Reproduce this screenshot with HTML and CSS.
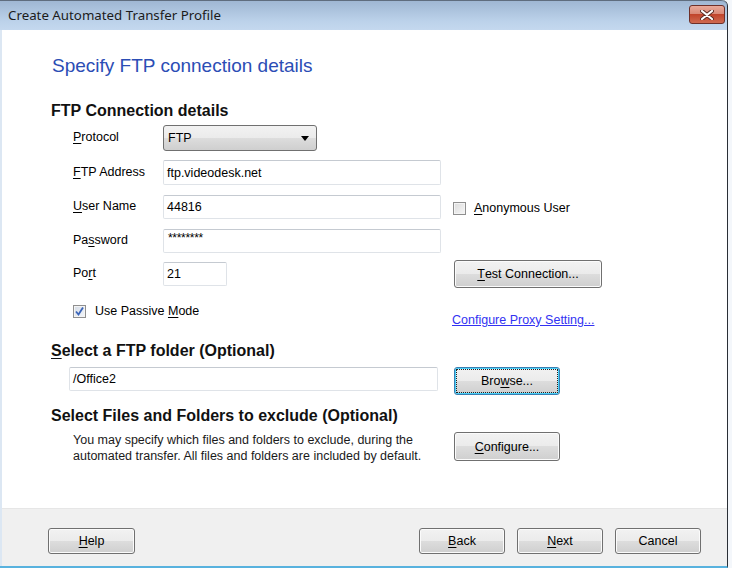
FILE: index.html
```html
<!DOCTYPE html>
<html>
<head>
<meta charset="utf-8">
<link rel="stylesheet" href="styles.css">
</head>
<body>
<div class="window">
  <div class="titlebar">
    <span class="title">Create Automated Transfer Profile</span>
    <button class="close" aria-label="Close">
      <svg width="14" height="10" viewBox="0 0 14 10"><path d="M2 1 L12 9 M12 1 L2 9" stroke="#5a2a22" stroke-width="4" stroke-linecap="round"/><path d="M2 1 L12 9 M12 1 L2 9" stroke="#ffffff" stroke-width="2.2" stroke-linecap="round"/></svg>
    </button>
  </div>
  <div class="client">
    <div class="content">
      <h1 class="main-heading">Specify FTP connection details</h1>
      <h2 class="section-heading first">FTP Connection details</h2>
      <div class="form">
        <div class="row r-protocol">
          <span class="label"><u>P</u>rotocol</span>
          <div class="field"><div class="combo"><span>FTP</span><svg width="8" height="5" viewBox="0 0 8 5"><path d="M0 0 H8 L4 5 Z" fill="#000"/></svg></div></div>
        </div>
        <div class="row r-address">
          <span class="label"><u>F</u>TP Address</span>
          <div class="field"><div class="input wide">ftp.videodesk.net</div></div>
        </div>
        <div class="row r-user">
          <span class="label"><u>U</u>ser Name</span>
          <div class="field"><div class="input wide">44816</div></div>
          <label class="check anon"><span class="box"></span><span><u>A</u>nonymous User</span></label>
        </div>
        <div class="row r-pass">
          <span class="label">Pa<u>s</u>sword</span>
          <div class="field"><div class="input wide pw">********</div></div>
        </div>
        <div class="row r-port">
          <span class="label">Po<u>r</u>t</span>
          <div class="field"><div class="input port">21</div></div>
          <button class="btn test"><u>T</u>est Connection...</button>
        </div>
        <div class="row r-passive">
          <label class="check passive"><span class="box checked"><svg width="11" height="11" viewBox="0 0 11 11"><path d="M2 5.5 L4.5 8.5 L9 1.5" stroke="#3a64b8" stroke-width="1.8" fill="none"/></svg></span><span>Use Passive <u>M</u>ode</span></label>
          <a class="link" href="#">Configure Proxy Setting...</a>
        </div>
      </div>
      <h2 class="section-heading second"><u>S</u>elect a FTP folder (Optional)</h2>
      <div class="row r-folder">
        <div class="input folder">/Office2</div>
        <button class="btn focus"><span class="dots">Bro<u>w</u>se...</span></button>
      </div>
      <h2 class="section-heading third">Select Files and Folders to exclude (Optional)</h2>
      <div class="row r-exclude">
        <p class="desc">You may specify which files and folders to exclude, during the automated transfer. All files and folders are included by default.</p>
        <button class="btn configure"><u>C</u>onfigure...</button>
      </div>
    </div>
    <div class="footer">
      <button class="btn fbtn help"><u>H</u>elp</button>
      <div class="spacer"></div>
      <button class="btn fbtn"><u>B</u>ack</button>
      <button class="btn fbtn"><u>N</u>ext</button>
      <button class="btn fbtn">Cancel</button>
    </div>
  </div>
</div>
</body>
</html>
```

FILE: styles.css
```css
html, body {
  margin: 0;
  padding: 0;
}
body {
  width: 732px;
  height: 568px;
  overflow: hidden;
  background: #f4f7fb;
  font-family: "Liberation Sans", Arial, sans-serif;
  font-size: 12.5px;
  color: #000;
}
.window {
  width: 727px;
  height: 566px;
  display: flex;
  flex-direction: column;
  border-right: 1px solid #2a2f36;
  border-bottom: 2px solid #58b2de;
  border-top-right-radius: 6px;
  background: #c9dbef;
}
.titlebar {
  height: 30px;
  flex: none;
  display: flex;
  align-items: center;
  justify-content: space-between;
  background: linear-gradient(#9fb7d3, #bcd2ea 70%, #c4d8ee);
  border-top: 1px solid #5f6d7e;
  border-top-right-radius: 6px;
  box-sizing: border-box;
  padding: 0 2px 2px 8px;
}
.title {
  font-family: "Noto Sans", "Open Sans", sans-serif;
  font-size: 13.3px;
  color: #1b1b1b;
  margin-top: 1px;
}
.close {
  width: 36px;
  height: 19px;
  padding: 0;
  border: 1px solid #6e3029;
  border-radius: 3px;
  background: linear-gradient(#e9a99a, #d98a78 45%, #c1452c 50%, #cf6a50);
  display: flex;
  align-items: center;
  justify-content: center;
}
.client {
  flex: 1;
  display: flex;
  flex-direction: column;
  border-left: 2px solid #dce7f3;
  background: #fff;
}
.content {
  flex: 1;
  padding: 24px 0 0 49px;
}
.main-heading {
  margin: 0 0 0 1px;
  font-size: 19px;
  line-height: 23px;
  font-weight: normal;
  color: #2b4db5;
}
.section-heading {
  margin: 0;
  font-size: 16px;
  line-height: 18px;
  font-weight: bold;
  color: #111;
}
.section-heading.first { margin-top: 25px; }
.section-heading.second { margin-top: 12px; }
.section-heading.third { margin-top: 12px; }
.form {
  margin-top: 5px;
  padding-left: 22px;
}
.row {
  display: flex;
  align-items: center;
}
.label {
  width: 90px;
  flex: none;
  margin-top: -2px;
}
.field {
  width: 290px;
  flex: none;
  height: 100%;
  display: flex;
  align-items: center;
}
u { text-decoration: underline; text-underline-offset: 2px; }
.r-protocol { height: 26px; }
.r-address { height: 25px; margin-top: 9px; }
.r-user { height: 24px; margin-top: 10px; }
.r-pass { height: 24px; margin-top: 10px; }
.r-port { height: 28px; margin-top: 7px; }
.r-passive { height: 30px; margin-top: 12px; }
.combo {
  width: 154px;
  height: 26px;
  box-sizing: border-box;
  border: 1px solid #707070;
  border-radius: 3px;
  background: linear-gradient(#f2f2f2, #ebebeb 50%, #dddddd 50%, #cfcfcf);
  display: flex;
  align-items: center;
  justify-content: space-between;
  padding: 0 7px 0 4px;
}
.input {
  height: 100%;
  box-sizing: border-box;
  border: 1px solid #dfe3e8;
  border-top-color: #c5cad1;
  border-radius: 2px;
  display: flex;
  align-items: center;
  padding-left: 3px;
  background: #fff;
}
.input.wide { width: 278px; }
.input.port { width: 64px; height: 24px; }
.input.pw {
  align-items: flex-start;
  padding-top: 3px;
  padding-left: 4px;
  font-size: 12px;
  letter-spacing: -0.3px;
  line-height: 10px;
}
.check {
  display: flex;
  align-items: center;
  gap: 8px;
}
.box {
  width: 13px;
  height: 13px;
  box-sizing: border-box;
  border: 1px solid #8f8f8f;
  background: linear-gradient(135deg, #dcdcdc, #f6f6f6);
  box-shadow: inset 0 0 0 1px #f4f4f4;
  display: flex;
  align-items: center;
  justify-content: center;
  flex: none;
}
.box.checked { background: linear-gradient(135deg, #d5dce6, #f3f6fa); }
.anon { margin-top: 2px; }
.passive { gap: 9px; align-self: flex-start; margin-top: 4px; width: 379px; }
.link {
  color: #3232f2;
  text-decoration: underline;
  align-self: flex-end;
  margin-bottom: 3px;
}
.btn {
  font-family: "Liberation Sans", Arial, sans-serif;
  font-size: 12.5px;
  color: #000;
  box-sizing: border-box;
  border: 1px solid #707070;
  border-radius: 3px;
  background: linear-gradient(#f2f2f2, #ebebeb 50%, #dddddd 50%, #cfcfcf);
  box-shadow: inset 0 0 0 1px #fbfbfb;
  padding: 0;
  display: flex;
  align-items: center;
  justify-content: center;
}
.btn.test { width: 148px; height: 28px; margin-left: 1px; }
.r-folder { margin-top: 7px; padding-left: 18px; align-items: flex-start; }
.input.folder { width: 369px; height: 24px; }
.btn.focus {
  width: 106px;
  height: 28px;
  margin-left: 16px;
  border-color: #3c7fb1;
  box-shadow: inset 0 0 0 1px #48d2fb;
}
.dots {
  display: flex;
  align-items: center;
  justify-content: center;
  width: 100px;
  height: 22px;
  box-sizing: border-box;
  outline: 1px dotted #222;
}
.r-exclude { margin-top: 7px; padding-left: 22px; align-items: flex-start; }
.desc {
  margin: 0;
  width: 381px;
  flex: none;
  line-height: 16px;
  color: #1a1a1a;
}
.btn.configure { width: 106px; height: 29px; }
.footer {
  flex: none;
  height: 58px;
  box-sizing: border-box;
  background: #f0f0f0;
  border-top: 1px solid #e6e6e6;
  padding: 19px 26px 0 46px;
  display: flex;
  align-items: flex-start;
  gap: 12px;
}
.spacer { flex: 1; }
.fbtn { width: 86px; height: 26px; }
.fbtn.help { width: 87px; }
```
